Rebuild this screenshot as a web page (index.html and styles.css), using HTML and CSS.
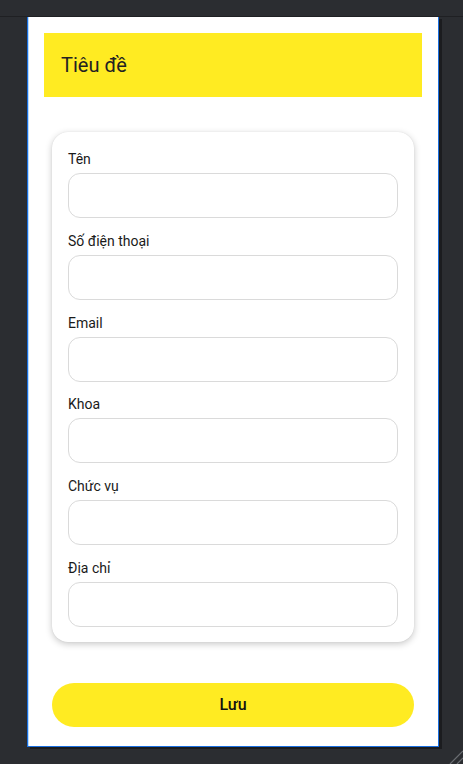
FILE: index.html
```html
<!DOCTYPE html>
<html lang="vi">
<head>
<meta charset="utf-8">
<title>Form</title>
<link rel="stylesheet" href="styles.css">
</head>
<body>
<div class="topbar"></div>
<div class="frame">
  <header class="header"><h1 class="title">Tiêu đề</h1></header>
  <form class="card">
    <div class="field"><label class="label">Tên</label><input class="input" type="text"></div>
    <div class="field"><label class="label">Số điện thoại</label><input class="input" type="text"></div>
    <div class="field"><label class="label">Email</label><input class="input" type="text"></div>
    <div class="field"><label class="label">Khoa</label><input class="input" type="text"></div>
    <div class="field"><label class="label">Chức vụ</label><input class="input" type="text"></div>
    <div class="field"><label class="label">Địa chỉ</label><input class="input" type="text"></div>
  </form>
  <button class="save" type="button">Lưu</button>
</div>
<svg class="grip" width="16" height="16" viewBox="0 0 16 16">
  <line x1="16" y1="3" x2="3" y2="16" stroke="#6b6d72" stroke-width="1.2"/>
  <line x1="16" y1="10" x2="10" y2="16" stroke="#6b6d72" stroke-width="1.2"/>
</svg>
</body>
</html>
```
FILE: styles.css
```css
html, body {
  margin: 0;
  padding: 0;
}
body {
  background: #2b2d31;
  font-family: Roboto, "Noto Sans", sans-serif;
  height: 764px;
  overflow: hidden;
  position: relative;
}
.topbar {
  height: 17px;
  background: #2b2d31;
  border-bottom: 1px solid #1f2023;
  box-sizing: border-box;
}
.frame {
  margin-left: 27px;
  width: 412px;
  height: 730px;
  box-sizing: border-box;
  background: #fff;
  border-left: 1px solid #1a6fe0;
  border-right: 1px solid #1a6fe0;
  border-bottom: 1px solid #1a6fe0;
  box-shadow: inset 1px 0 0 #b8dcff, 3px 2px 0 #1b1c1f;
  padding: 16px 16px 0 16px;
  display: flex;
  flex-direction: column;
}
.header {
  height: 64px;
  background: #ffeb22;
  display: flex;
  align-items: center;
  padding-left: 17px;
}
.title {
  margin: 0;
  font-size: 20px;
  font-weight: 400;
  color: #222;
  line-height: 24px;
}
.card {
  margin: 35px 8px 0 8px;
  background: #fff;
  border-radius: 16px;
  box-shadow: 0 2px 7px rgba(0,0,0,0.22), 0 0 1px rgba(0,0,0,0.12);
  padding: 17px 16px 15px 16px;
  display: flex;
  flex-direction: column;
  gap: 12.8px;
}
.field {
  display: flex;
  flex-direction: column;
  gap: 4px;
}
.label {
  font-size: 14px;
  line-height: 20px;
  color: #1a1a1a;
}
.input {
  height: 45px;
  box-sizing: border-box;
  border: 1px solid #dadada;
  border-radius: 12px;
  background: #fff;
  margin: 0;
  padding: 0 12px;
  font-family: inherit;
  font-size: 14px;
  outline: none;
}
.save {
  margin: 41px 8px 0 8px;
  height: 44px;
  border: none;
  border-radius: 22px;
  background: #ffeb22;
  font-family: inherit;
  font-size: 16px;
  font-weight: 500;
  color: #111;
  padding: 0;
}
.grip {
  position: absolute;
  right: 0;
  bottom: 0;
}
```
